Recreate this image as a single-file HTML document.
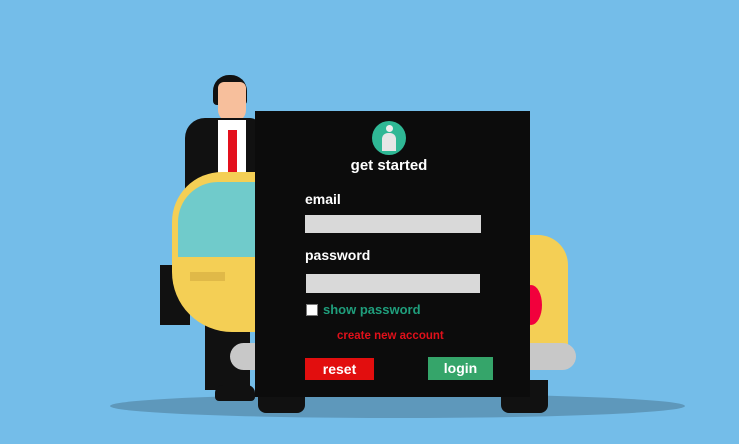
<!DOCTYPE html><html><head><style>
body{margin:0;width:739px;height:444px;overflow:hidden;background:#74bde9;position:relative;font-family:"Liberation Sans",sans-serif}
div{position:absolute}
.t{font-weight:bold;color:#fff}
</style></head><body>
<div style="left:110px;top:394px;width:575px;height:24px;border-radius:50%;background:#5e98bb"></div>
<!-- man -->
<div style="left:213px;top:75px;width:34px;height:30px;border-radius:16px 16px 4px 4px;background:#111"></div>
<div style="left:218px;top:82px;width:28px;height:40px;border-radius:6px 6px 12px 12px;background:#f7bf9c"></div>
<div style="left:185px;top:118px;width:75px;height:180px;background:#111;border-radius:20px 10px 0 0"></div>
<div style="left:218px;top:120px;width:28px;height:55px;background:#fff"></div>
<div style="left:228px;top:130px;width:9px;height:45px;background:#e3101c"></div>
<div style="left:160px;top:265px;width:30px;height:60px;background:#111"></div>
<div style="left:205px;top:300px;width:45px;height:90px;background:#111"></div>
<div style="left:215px;top:385px;width:40px;height:16px;border-radius:8px 8px 4px 4px;background:#111"></div>
<!-- car -->
<div style="left:172px;top:172px;width:120px;height:160px;border-radius:50px 10px 10px 60px;background:#f4cf55"></div>
<div style="left:178px;top:182px;width:90px;height:75px;border-radius:40px 0 0 0;background:#70cbcb"></div>
<div style="left:190px;top:272px;width:35px;height:9px;background:#e0b948"></div>
<div style="left:500px;top:235px;width:68px;height:115px;border-radius:0 30px 0 0;background:#f4cf55"></div>
<div style="left:520px;top:285px;width:22px;height:40px;border-radius:50%;background:#f2003c"></div>
<div style="left:230px;top:343px;width:346px;height:27px;border-radius:14px;background:#c8c8c8"></div>
<div style="left:258px;top:380px;width:47px;height:33px;border-radius:0 0 8px 8px;background:#111"></div>
<div style="left:501px;top:380px;width:47px;height:33px;border-radius:0 0 8px 8px;background:#111"></div>
<!-- panel -->
<div style="left:255px;top:111px;width:275px;height:286px;background:#0c0c0c"></div>
<div style="left:372px;top:121px;width:34px;height:34px;border-radius:50%;background:#2fb895;overflow:hidden">
<div style="left:14px;top:4px;width:7px;height:7px;border-radius:50%;background:#eee"></div>
<div style="left:10px;top:12px;width:14px;height:18px;border-radius:6px 6px 0 0;background:#e6e6e6"></div></div>
<div class="t" style="left:255px;width:268px;text-align:center;top:157px;font-size:15px">get started</div>
<div class="t" style="left:305px;top:191px;font-size:14px">email</div>
<div style="left:305px;top:215px;width:176px;height:18px;background:#d9d9d9"></div>
<div class="t" style="left:305px;top:247px;font-size:14px">password</div>
<div style="left:306px;top:274px;width:174px;height:19px;background:#d9d9d9"></div>
<div style="left:306px;top:304px;width:10px;height:10px;background:#fff;border:1px solid #777"></div>
<div style="left:323px;top:302px;font-size:13px;font-weight:bold;color:#1f9e7c">show password</div>
<div style="left:337px;top:330px;font-size:11.5px;font-weight:bold;color:#e0101a">create new account</div>
<div class="t" style="left:305px;top:358px;width:69px;height:22px;background:#e20e0e;text-align:center;line-height:22px;font-size:14px">reset</div>
<div class="t" style="left:428px;top:357px;width:65px;height:23px;background:#35a56a;text-align:center;line-height:22px;font-size:14px">login</div>
</body></html>
